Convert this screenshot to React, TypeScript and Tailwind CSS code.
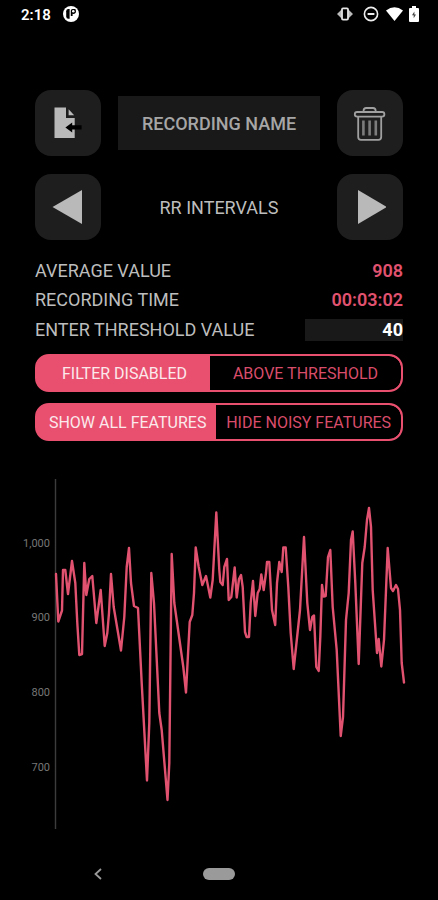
import { ReactNode, useState } from 'react';

const PLOT_POINTS = [
  [32, 95], [34.3, 142.5], [38, 131.5], [39, 91], [41.3, 91], [44, 115], [48, 82], [51.3, 104], [53.3, 144],
  [55.3, 176], [58, 175], [60.3, 84], [62.3, 116], [65.3, 100], [68.3, 97], [72.3, 144], [76.7, 111], [80.7, 167],
  [83.3, 154], [85, 134], [87, 95], [89.7, 128], [97, 171.5], [100.3, 138], [102.7, 88], [105, 69], [107, 104],
  [110, 127], [114, 129], [117.7, 204], [123, 301.5], [125.3, 244], [127.3, 94], [130, 124], [135.3, 234],
  [137.7, 251], [143.5, 321], [145.3, 284], [147.7, 75], [150.3, 124], [152.7, 141], [159.3, 188], [162, 213.5],
  [165.7, 143], [168.3, 136], [170, 114], [171.7, 68.5], [174.7, 88], [178.3, 106], [182, 97], [186.3, 118.5],
  [188.7, 101], [192.3, 33.5], [195.3, 91], [196.3, 103], [198.7, 106], [200.3, 88], [203, 80], [204.7, 121],
  [207.3, 118], [210.7, 88.5], [212.7, 118.5], [215, 100], [217, 96], [218.7, 108], [221, 153], [222.7, 158],
  [225, 158], [226.7, 124], [229, 102], [231.3, 137], [233.7, 114], [235.7, 110], [237.3, 95.5], [239.7, 111],
  [242, 94], [243, 83], [245.3, 83], [248, 131], [251.2, 146], [253, 104], [255.3, 83], [257.7, 93], [259.3, 68.5],
  [261.7, 68.5], [264.3, 108], [266.7, 154], [269.7, 190], [276, 131], [280, 58], [283.3, 124], [286, 151],
  [288.3, 138], [290, 136.5], [292.3, 188], [294.7, 192], [296.3, 158], [298, 106], [299.7, 117.5], [301.7, 117],
  [304, 78], [306.3, 71], [308.7, 128], [312.7, 171], [316.7, 257], [319, 238], [322, 141], [324.7, 114],
  [327, 61], [328.7, 52.5], [331.3, 104], [334.7, 185], [338.3, 84], [340.7, 68], [343, 41], [345, 29], [347, 48],
  [348.7, 111], [353, 174], [354.7, 160], [357.3, 187.5], [360, 161], [363.7, 69], [367, 109], [369, 112],
  [372, 106], [374, 110], [376, 131], [377.7, 184], [380, 203.5],
];

const AXIS_LABELS = [
  { label: '1,000', y: 64 },
  { label: '900', y: 138 },
  { label: '800', y: 213 },
  { label: '700', y: 288 },
];

function StatusBar() {
  return (
    <div className="flex h-7 items-center justify-between pl-[21px] pr-[19px] text-white">
      <div className="flex items-center gap-3">
        <span className="pt-0.5 text-[15px] font-semibold">2:18</span>
        <svg className="size-4" viewBox="0 0 16 16" aria-hidden="true">
          <circle cx="8" cy="8" r="8" fill="#fff" />
          <path d="M3.2 5.2Q3.2 3 5.4 3H6.6V12.8H5.4Q3.2 12.8 3.2 10.6Z" fill="#000" />
          <path d="M7.8 10V4.8Q7.8 3 9.6 3H12.4Q13.4 5 12.8 6.6Q12.2 8.2 9.6 7.8V10Z" fill="#000" />
          <circle cx="10.3" cy="5.2" r="1.3" fill="#fff" />
        </svg>
      </div>
      <div className="flex items-center">
        <svg className="mr-2.5 h-4 w-4" viewBox="0 0 16 16" aria-hidden="true">
          <path d="M0 8L4.6 3.4V12.6ZM16 8L11.4 3.4V12.6Z" fill="#bbb" />
          <rect x="5" y="2.4" width="6" height="11.2" rx="1" fill="#000" stroke="#e5e5e5" strokeWidth="1.8" />
        </svg>
        <svg className="mr-[7px] h-4 w-4" viewBox="0 0 16 16" fill="none" stroke="#eee" aria-hidden="true">
          <circle cx="8" cy="8" r="6.6" strokeWidth="1.6" />
          <path d="M4.6 8H11.4" strokeWidth="2" />
        </svg>
        <svg className="mr-1.5 h-4 w-[17px]" viewBox="0 0 17 16" aria-hidden="true">
          <path d="M0 4.4Q8.5 -2 17 4.4L8.5 15Z" fill="#fff" />
        </svg>
        <svg className="h-4 w-2.5" viewBox="0 0 10 16" aria-hidden="true">
          <path d="M3 0H7V2H9Q10 2 10 3V15Q10 16 9 16H1Q0 16 0 15V3Q0 2 1 2H3Z" fill="#fff" />
          <path d="M5.4 5.4L3 9.2H4.7V12.2L7 8.4H5.4Z" fill="#444" />
        </svg>
      </div>
    </div>
  );
}

function IconButton({ label, children }: { label: string; children: ReactNode }) {
  return (
    <button
      type="button"
      aria-label={label}
      className="flex size-[66px] shrink-0 items-center justify-center rounded-2xl bg-[#1e1e1e]"
    >
      {children}
    </button>
  );
}

function Segmented({ label, options }: { label: string; options: string[] }) {
  const [active, setActive] = useState(0);

  return (
    <div
      role="group"
      aria-label={label}
      className="flex h-[38px] overflow-hidden rounded-[14px] border-2 border-[#e9506f] bg-[#e9506f]"
    >
      {options.map((option, i) => (
        <button
          key={option}
          type="button"
          aria-pressed={active === i}
          onClick={() => setActive(i)}
          className={`flex-auto whitespace-nowrap pt-0.5 text-base ${
            active === i ? 'bg-[#e9506f] text-[#fbe9ec]' : 'bg-black text-[#d94d6b]'
          } ${i === 0 ? 'rounded-l-xl pl-0.5' : 'rounded-r-xl'}`}
        >
          {option}
        </button>
      ))}
    </div>
  );
}

function IntervalChart() {
  return (
    <svg className="w-full overflow-visible" viewBox="0 0 380 350" role="img" aria-label="RR intervals chart">
      <path d="M31.5 0V350" stroke="#3c3c3c" strokeWidth="1.4" />
      {AXIS_LABELS.map(({ label, y }) => (
        <text key={label} x="26" y={y} dy="4" textAnchor="end" className="fill-[#777777] text-[11px]">
          {label}
        </text>
      ))}
      <polyline
        points={PLOT_POINTS.map((p) => p.join(',')).join(' ')}
        fill="none"
        stroke="#e0526f"
        strokeWidth="2.4"
        strokeLinejoin="round"
        strokeLinecap="round"
      />
    </svg>
  );
}

export default function App() {
  return (
    <div className="min-h-screen bg-black font-['Roboto',sans-serif] text-[#bdbdbd]">
      <StatusBar />

      <main className="pt-[62px]">
        <div className="px-[35px]">
          <div className="flex items-center gap-[17px]">
            <IconButton label="Export recording">
              <svg className="size-8" viewBox="0 0 32 32" aria-hidden="true">
                <path d="M2.5 .5H14V11H22.7V31H2.5Z" fill="#b9b9b9" />
                <path d="M16.6 2.2L22.2 8.2H16.6Z" fill="#b9b9b9" />
                <path d="M13.4 20.4L20.2 15.4V18.2H29.6V22.6H20.2V25.4Z" fill="#000" />
              </svg>
            </IconButton>
            <button
              type="button"
              className="h-[54px] min-w-0 flex-1 bg-[#191919] pt-0.5 text-lg font-medium text-[#a6a6a6]"
            >
              RECORDING NAME
            </button>
            <IconButton label="Delete recording">
              <svg className="size-9" viewBox="0 0 36 36" fill="none" stroke="#a0a0a0" strokeWidth="1.8" aria-hidden="true">
                <rect x="2.8" y="7" width="29.6" height="4.6" rx="2.3" />
                <path d="M11.6 7V5.6Q11.6 3 14.2 3H21Q23.6 3 23.6 5.6V7" />
                <path d="M6.2 11.6V32Q6.2 34.8 9 34.8H26.4Q29.2 34.8 29.2 32V11.6" />
                <path d="M11.4 15.6V30.6M17.6 15.6V30.6M23.8 15.6V30.6" stroke="#7c7c7c" strokeWidth="2.6" />
              </svg>
            </IconButton>
          </div>

          <div className="mt-[18px] flex items-center justify-between">
            <IconButton label="Previous feature">
              <svg className="h-9 w-8" viewBox="0 0 32 36" fill="#b9b9b9" aria-hidden="true">
                <path d="M0.5 18L30 1V35Z" />
              </svg>
            </IconButton>
            <h1 className="pt-0.5 text-lg">RR INTERVALS</h1>
            <IconButton label="Next feature">
              <svg className="h-9 w-8" viewBox="0 0 32 36" fill="#b9b9b9" aria-hidden="true">
                <path d="M33 18L4 1V35Z" />
              </svg>
            </IconButton>
          </div>

          <div className="mt-4 text-lg">
            <div className="flex h-[29px] items-center justify-between">
              <span>AVERAGE VALUE</span>
              <span className="font-semibold text-[#e0526f]">908</span>
            </div>
            <div className="flex h-[30px] items-center justify-between">
              <span>RECORDING TIME</span>
              <span className="font-semibold text-[#e0526f]">00:03:02</span>
            </div>
            <div className="flex h-[29px] items-center justify-between">
              <label htmlFor="threshold">ENTER THRESHOLD VALUE</label>
              <input
                id="threshold"
                type="text"
                inputMode="numeric"
                defaultValue="40"
                className="h-[22px] w-[98px] bg-[#191919] text-right font-bold text-white outline-none"
              />
            </div>
          </div>

          <div className="mt-2.5 flex flex-col gap-[11px]">
            <Segmented label="Filter" options={['FILTER DISABLED', 'ABOVE THRESHOLD']} />
            <Segmented label="Features" options={['SHOW ALL FEATURES', 'HIDE NOISY FEATURES']} />
          </div>
        </div>

        <div className="mt-[38px] pl-6 pr-[34px]">
          <IntervalChart />
        </div>
      </main>

      <nav className="grid grid-cols-[1fr_auto_1fr] items-center pt-[39px]">
        <button type="button" aria-label="Back" className="mr-2 justify-self-center">
          <svg className="h-3 w-2" viewBox="0 0 8 12" fill="none" stroke="#9a9a9a" strokeWidth="1.8" aria-hidden="true">
            <path d="M7 1L1.5 6L7 11" />
          </svg>
        </button>
        <button type="button" aria-label="Home" className="h-3 w-8 rounded-full bg-[#9a9a9a]" />
      </nav>
    </div>
  );
}
